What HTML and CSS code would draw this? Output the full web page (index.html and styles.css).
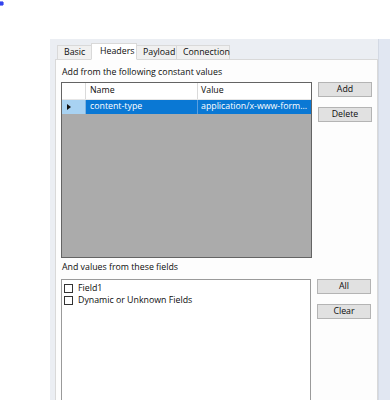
FILE: index.html
```html
<!DOCTYPE html>
<html>
<head>
<meta charset="utf-8">
<link rel="stylesheet" href="styles.css">
</head>
<body>
<div class="dot"></div>
<div class="screen">
  <div class="dialog">
    <div class="tabs">
      <div class="tab">Basic</div>
      <div class="tab active">Headers</div>
      <div class="tab">Payload</div>
      <div class="tab">Connection</div>
    </div>
    <div class="page">
      <div class="label">Add from the following constant values</div>
      <div class="section">
        <div class="grid">
          <div class="grow ghead">
            <div class="rh"></div>
            <div class="c1">Name</div>
            <div class="c2">Value</div>
          </div>
          <div class="grow gsel">
            <div class="rh"><span class="arrow"></span></div>
            <div class="c1">content-type</div>
            <div class="c2">application/x-www-form...</div>
          </div>
          <div class="gempty"></div>
        </div>
        <div class="buttons">
          <div class="btn">Add</div>
          <div class="btn">Delete</div>
        </div>
      </div>
      <div class="label label2">And values from these fields</div>
      <div class="section">
        <div class="list">
          <div class="item"><span class="cb"></span>Field1</div>
          <div class="item"><span class="cb"></span>Dynamic or Unknown Fields</div>
        </div>
        <div class="buttons">
          <div class="btn">All</div>
          <div class="btn">Clear</div>
        </div>
      </div>
    </div>
  </div>
  <div class="strip"></div>
</div>
</body>
</html>
```
FILE: styles.css
```css
html, body {
  margin: 0;
  padding: 0;
  background: #ffffff;
  width: 390px;
  height: 400px;
  overflow: hidden;
  font-family: "Open Sans", "Noto Sans", sans-serif;
  font-size: 8.8px;
  color: #0d0d0d;
}
.dot {
  width: 3px;
  height: 3px;
  margin: 2px 0 0 0;
  background: #3344ee;
  box-shadow: 1px 0 0 #8890f5, -1px 0 0 #8890f5, 0 1px 0 #8890f5, 0 -1px 0 #8890f5;
}
.screen {
  display: flex;
  margin: 34px 0 0 50px;
  height: 361px;
}
.dialog {
  width: 328px;
  background: #ebeef3;
  padding: 4px 0 0 5px;
  box-sizing: border-box;
  display: flex;
  flex-direction: column;
}
.strip {
  width: 12px;
  background: #e1e7f2;
  border-left: 1px solid #d3d9e4;
}
.tabs {
  display: flex;
  align-items: flex-end;
  padding-left: 2px;
  height: 17px;
}
.tab {
  height: 14px;
  line-height: 13px;
  padding: 0 6px;
  border: 1px solid #d9d9d9;
  border-bottom: none;
  background: #f0f0f0;
  margin-right: -1px;
  box-sizing: border-box;
}
.tab:first-child { width: 37px; }
.tab.active {
  height: 17px;
  line-height: 15px;
  background: #ffffff;
  margin: 0 -1px 0 -2px;
  padding: 0 7px 0 8px;
  position: relative;
  z-index: 1;
  border-bottom: 1px solid #ffffff;
  margin-bottom: -1px;
  width: 46px;
}
.tab:nth-child(3) { width: 41px; }
.tab:nth-child(4) { width: 54px; }
.page {
  flex: 1;
  background: #fdfdfd;
  border: 1px solid #d9d9d9;
  border-bottom: none;
  padding: 5px 5px 0 5px;
}
.label {
  height: 17px;
  line-height: 15px;
  padding-left: 1px;
}
.label2 {
  height: 21px;
  line-height: 19px;
}
.section {
  display: flex;
  gap: 6px;
}
.grid {
  width: 251px;
  height: 176px;
  border: 1px solid #646464;
  box-sizing: border-box;
  display: flex;
  flex-direction: column;
  background: #ababab;
}
.grow {
  display: flex;
  height: 15px;
  line-height: 14px;
}
.ghead {
  background: #ffffff;
  border-bottom: 1px solid #e6e6e6;
  height: 16px;
}
.ghead .rh, .ghead .c1 {
  border-right: 1px solid #dadada;
}
.rh {
  width: 24px;
  flex: none;
  box-sizing: border-box;
  display: flex;
  align-items: center;
  padding-left: 5px;
}
.c1 {
  width: 112px;
  flex: none;
  padding-left: 4px;
  box-sizing: border-box;
}
.c2 {
  flex: 1;
  padding-left: 3px;
  white-space: nowrap;
  overflow: hidden;
}
.gsel {
  height: 14px;
  line-height: 13px;
}
.gsel .rh {
  background: #a8d2f2;
  border-right: 1px solid #7fb2dd;
}
.gsel .c1, .gsel .c2 {
  background: #0a78d4;
  color: #ffffff;
}
.gsel .c1 { border-right: 1px solid #5a9fe0; }
.arrow {
  width: 0;
  height: 0;
  border-top: 3.5px solid transparent;
  border-bottom: 3.5px solid transparent;
  border-left: 4px solid #111111;
}
.gempty { flex: 1; }
.buttons {
  display: flex;
  flex-direction: column;
  gap: 10px;
}
.btn {
  width: 54px;
  height: 15px;
  box-sizing: border-box;
  background: #e1e1e1;
  border: 1px solid #b4b4b4;
  text-align: center;
  line-height: 13px;
}
.list {
  width: 250px;
  height: 130px;
  border: 1px solid #9a9a9a;
  box-sizing: border-box;
  background: #ffffff;
  padding: 2px 0 0 2px;
}
.item {
  display: flex;
  align-items: center;
  height: 12px;
  line-height: 12px;
}
.cb {
  width: 9px;
  height: 9px;
  border: 1px solid #333333;
  box-sizing: border-box;
  background: #ffffff;
  margin-right: 5px;
}
```
